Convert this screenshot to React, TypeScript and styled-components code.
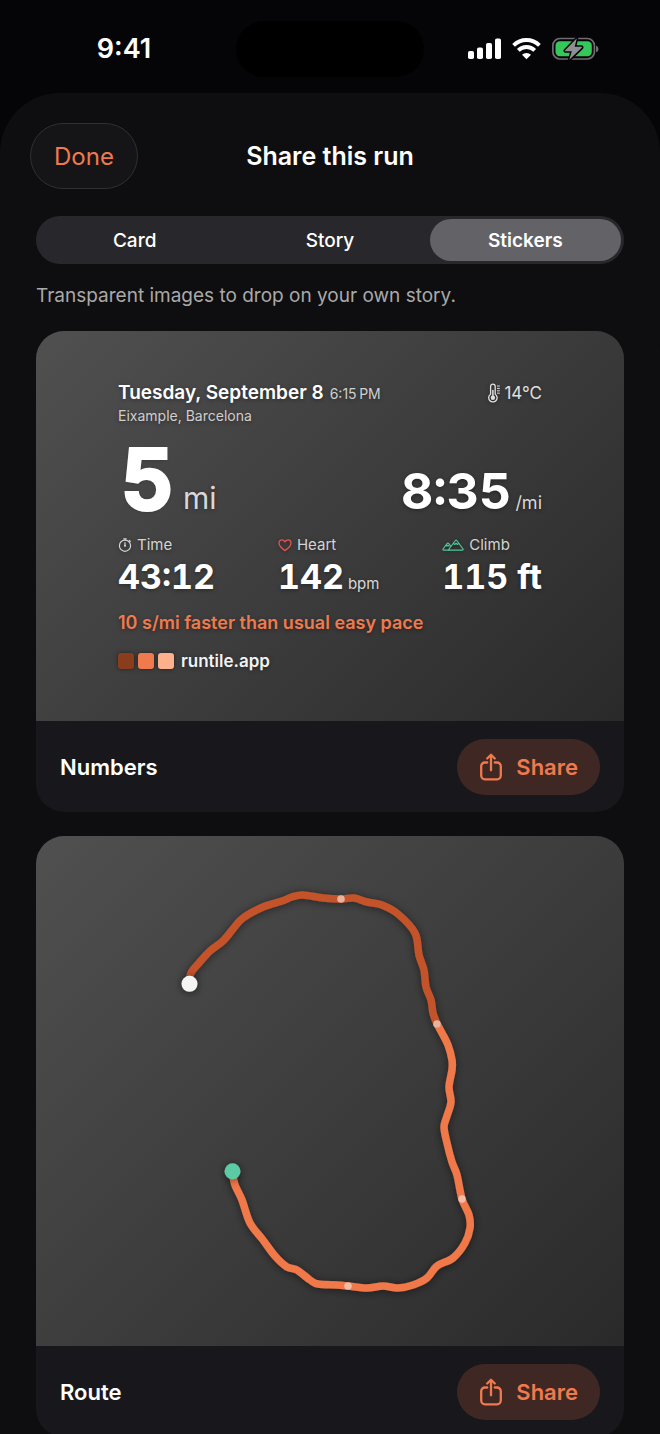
import React from "react";
import styled, { createGlobalStyle } from "styled-components";

const GlobalStyle = createGlobalStyle`
  *, *::before, *::after { box-sizing: border-box; }
  body {
    margin: 0;
    background: #050507;
    color: #fff;
    font-family: Inter, "Liberation Sans", sans-serif;
    -webkit-font-smoothing: antialiased;
  }
  h1, h2, p, dl, dd, dt { margin: 0; font: inherit; }
  button { font: inherit; border: 0; cursor: pointer; }
`;

const accent = "#ef7a4d";

const Screen = styled.div`
  display: flex;
  flex-direction: column;
  height: 100vh;
  overflow: hidden;
`;

const StatusBar = styled.header`
  display: grid;
  grid-template-columns: 1fr 188px 1fr;
  align-items: center;
  flex: none;
  height: 93px;
  padding: 4px 0 0;
`;

const Clock = styled.time`
  justify-self: center;
  padding-left: 12px;
  font-size: 27px;
  line-height: 32px;
  font-weight: 600;
`;

const Island = styled.div`
  height: 56px;
  border-radius: 28px;
  background: #000;
`;

const Indicators = styled.div`
  display: flex;
  justify-self: center;
  align-items: center;
  gap: 11px;
  padding-right: 17px;
`;

const Sheet = styled.main`
  flex: 1;
  min-height: 0;
  overflow-y: auto;
  scrollbar-width: none;
  padding: 30px 36px 24px;
  border-radius: 60px 60px 0 0;
  background: #0e0e10;
`;

const SheetHeader = styled.div`
  display: grid;
  grid-template-columns: 1fr auto 1fr;
  align-items: center;
  margin: 0 -6px 27px;
`;

const DoneButton = styled.button`
  justify-self: start;
  height: 66px;
  padding: 2px 23px 0;
  border: 1px solid #303033;
  border-radius: 33px;
  background: #151517;
  color: ${accent};
  font-size: 24px;
  line-height: 32px;
`;

const SheetTitle = styled.h1`
  font-size: 25px;
  line-height: 32px;
  font-weight: 600;
`;

const Segments = styled.div`
  display: grid;
  grid-template-columns: repeat(3, 1fr);
  gap: 4px;
  height: 48px;
  padding: 3px;
  border-radius: 24px;
  background: #28282c;
`;

const Segment = styled.button<{ $active?: boolean }>`
  padding: 2px 0 0;
  border-radius: 21px;
  background: ${(p) => (p.$active ? "#636267" : "transparent")};
  color: #fff;
  font-size: 19px;
  line-height: 24px;
  font-weight: ${(p) => (p.$active ? 600 : 500)};
`;

const Hint = styled.p`
  margin: 20px 0 23px;
  color: #a9a9a9;
  font-size: 19px;
  line-height: 24px;
`;

const StickerList = styled.div`
  display: flex;
  flex-direction: column;
  gap: 24px;
`;

const Card = styled.article`
  overflow: hidden;
  flex: none;
  border-radius: 28px;
  background: #18181c;
`;

const Preview = styled.div`
  background: linear-gradient(135deg, #505050, #2a2a2a);
`;

const CardFooter = styled.footer`
  display: flex;
  align-items: center;
  justify-content: space-between;
  height: 91px;
  padding: 0 24px;
`;

const CardName = styled.h2`
  font-size: 22px;
  line-height: 28px;
  font-weight: 600;
`;

const ShareButton = styled.button`
  display: flex;
  align-items: center;
  gap: 14px;
  height: 56px;
  padding: 0 22px 0 23px;
  border-radius: 28px;
  background: #3f2823;
  color: ${accent};
  font-size: 22px;
  line-height: 28px;
  font-weight: 600;
`;

const NumbersSticker = styled.div`
  padding: 50px 82px 48px;
  text-shadow: 0 1px 4px rgba(0, 0, 0, 0.4);

  svg { filter: drop-shadow(0 1px 2px rgba(0, 0, 0, 0.4)); }
`;

const TitleRow = styled.div`
  display: flex;
  align-items: center;
  justify-content: space-between;
`;

const When = styled.p`
  font-size: 19px;
  line-height: 24px;
  font-weight: 600;
`;

const TimeOfDay = styled.span`
  margin-left: 6px;
  color: #cfcfcf;
  font-size: 14px;
  line-height: 16px;
  font-weight: 400;
`;

const Weather = styled.p`
  display: flex;
  align-items: center;
  gap: 4px;
  color: #e0e0e0;
  font-size: 17px;
  line-height: 24px;
`;

const Place = styled.p`
  margin-top: 1px;
  color: #cfcfcf;
  font-size: 14px;
  line-height: 20px;
`;

const Headline = styled.div`
  display: flex;
  align-items: baseline;
  justify-content: space-between;
  margin: 18px 0 19px;
`;

const Distance = styled.p`
  padding-left: 3px;
  font-size: 82px;
  line-height: 72px;
  font-weight: 600;
  font-feature-settings: "tnum";
  -webkit-text-stroke: 4px #fff;
  stroke-linejoin: round;
`;

const Pace = styled.p`
  font-size: 50px;
  line-height: 48px;
  font-weight: 700;
  font-feature-settings: "tnum";
`;

const Unit = styled.span<{ $size: number; $gap: number }>`
  margin-left: ${(p) => p.$gap}px;
  color: #d8d8d8;
  font-size: ${(p) => p.$size}px;
  line-height: 1;
  font-weight: 400;
  -webkit-text-stroke: 0;
`;

const Stats = styled.dl`
  display: flex;
  justify-content: space-between;
`;

const StatLabel = styled.dt`
  display: flex;
  align-items: center;
  gap: 5px;
  color: #d4d4d4;
  font-size: 15px;
  line-height: 20px;
`;

const StatValue = styled.dd`
  margin-top: 2px;
  font-size: 34px;
  line-height: 40px;
  font-weight: 700;
  font-feature-settings: "tnum";
`;

const Comparison = styled.p`
  margin: 14px 0;
  color: ${accent};
  font-size: 18px;
  line-height: 24px;
  font-weight: 600;
`;

const Brand = styled.p`
  display: flex;
  align-items: center;
  gap: 4px;
  color: #f2f2f2;
  font-size: 17px;
  line-height: 24px;
  font-weight: 600;
`;

const Tile = styled.span<{ $color: string }>`
  width: 16px;
  height: 16px;
  border-radius: 3px;
  background: ${(p) => p.$color};
  box-shadow: 0 0 4px rgba(0, 0, 0, 0.5);
`;

const BrandName = styled.span`
  margin-left: 3px;
`;

const RouteDrawing = styled.svg`
  display: block;
  width: 100%;
  height: auto;
`;

const SignalIcon = () => (
  <svg width="33" height="22" viewBox="0 0 33 22" fill="#fff" aria-hidden="true">
    <rect x="0" y="13" width="6" height="8" rx="1.8" />
    <rect x="9" y="9.500" width="6" height="11.500" rx="1.800" />
    <rect x="18" y="5" width="6" height="16" rx="1.800" />
    <rect x="27" y="0.500" width="6" height="20.500" rx="1.800" />
  </svg>
);

const WifiIcon = () => (
  <svg width="29" height="22" viewBox="0 0 29 22" fill="none" stroke="#fff" strokeWidth="3.900" aria-hidden="true">
    <path d="M1.600 7.300a18.400 18.400 0 0 1 25.800 0" />
    <path d="M6.300 12.400a11.700 11.700 0 0 1 16.400 0" />
    <path d="M14.500 21.200l-4.500-4.500a6.500 6.500 0 0 1 9 0z" fill="#fff" stroke="none" />
  </svg>
);

const BatteryIcon = () => (
  <svg width="47" height="24" viewBox="0 0 47 24" aria-hidden="true">
    <rect x="0.900" y="1.500" width="41.500" height="20.500" rx="7" fill="none" stroke="#6e6e72" strokeWidth="1.700" />
    <path d="M44 8.700c1.700.5 2.500 1.700 2.500 3.300s-.8 2.800-2.500 3.300z" fill="#6e6e72" />
    <rect x="3.500" y="4.300" width="36.300" height="15" rx="4.200" fill="#34c759" />
    <path
      d="M24.800 1.200L13.200 13.300c-.4.500-.2 1 .4 1h6.200l-2.500 8.500L29.800 10.800c.4-.5.200-1-.4-1h-6.700z"
      fill="#8e8e93"
      stroke="#050507"
      strokeWidth="3"
      strokeLinejoin="round"
      paintOrder="stroke"
    />
  </svg>
);

const ThermometerIcon = () => (
  <svg width="12" height="20" viewBox="0 0 12 20" fill="none" stroke="currentColor" aria-hidden="true">
    <path d="M2.600 11.200V3.400a2.300 2.300 0 0 1 4.600 0v7.800a4.200 4.200 0 1 1-4.600 0z" strokeWidth="1.300" />
    <path d="M4.900 7.500v7" strokeWidth="1.500" strokeLinecap="round" />
    <circle cx="4.900" cy="14.700" r="2.200" fill="currentColor" stroke="none" />
    <path d="M9 3h2.800M9 5.400h2.800M9 7.800h2.800M9 10.200h2.800" strokeWidth="1" />
  </svg>
);

const StopwatchIcon = () => (
  <svg width="14" height="14" viewBox="0 0 14 14" fill="none" stroke="currentColor" strokeWidth="1.200" strokeLinecap="round" aria-hidden="true">
    <circle cx="7" cy="7.700" r="5.600" />
    <path d="M5.700.8h2.600M7 1v1.200M11.400 2.500l.9.900M7 4.700v3" />
    <circle cx="7" cy="7.800" r="1" fill="currentColor" stroke="none" />
  </svg>
);

const HeartIcon = () => (
  <svg width="14" height="14" viewBox="0 0 14 14" fill="none" stroke="#e5534f" strokeWidth="1.300" strokeLinejoin="round" aria-hidden="true">
    <path d="M7 12.600C3.500 10.300 1 7.900 1 5.100 1 3.200 2.300 1.900 3.900 1.900c1.300 0 2.400.7 3.100 2 .7-1.300 1.800-2 3.100-2 1.600 0 2.900 1.300 2.900 3.200 0 2.800-2.500 5.200-6 7.500z" />
  </svg>
);

const MountainIcon = () => (
  <svg width="22" height="12" viewBox="0 0 22 12" fill="none" stroke="#4fc79a" strokeWidth="1.200" strokeLinejoin="round" strokeLinecap="round" aria-hidden="true">
    <path d="M7.300 11.200h13c.8 0 1.100-.6.700-1.200L14.800 1.500c-.4-.6-1-.6-1.400 0L7 10c-.4.600-.3 1.200.3 1.200z" />
    <path d="M7.200 11.200H1.700c-.8 0-1.100-.6-.7-1.200l4.300-5.600c.4-.5.900-.5 1.300 0l1.900 2.400" />
    <path d="M11.400 4.400l1.300 1.100 1.400-1.200 1.400 1.200 1.300-1.100M4 6.400l1 .7 1-.8 1 .8" />
  </svg>
);

const ShareIcon = () => (
  <svg width="22" height="28" viewBox="0 0 22 28" fill="none" stroke="currentColor" strokeWidth="2.300" strokeLinecap="round" strokeLinejoin="round" aria-hidden="true">
    <path d="M7.200 9.500H4.900A3.700 3.700 0 0 0 1.200 13.200v9.400a3.700 3.700 0 0 0 3.700 3.700h12.200a3.700 3.700 0 0 0 3.700-3.700v-9.400a3.700 3.700 0 0 0-3.700-3.700h-2.300" />
    <path d="M11 17.300V2M7.200 5.500L11 1.700l3.800 3.800" />
  </svg>
);

type Point = [number, number];

const slowHalf: Point[] = [
  [153, 148], [155, 137], [163, 127], [174, 115], [187, 105], [197, 93],
  [207, 82], [227, 71], [246, 65], [256, 61], [267, 59], [287, 62],
  [305, 63], [318, 62], [331, 66], [346, 69], [362, 78], [379, 97],
  [383, 119], [388, 134], [390, 151], [395, 164], [397, 177], [401, 188],
];

const fastHalf: Point[] = [
  [401, 188], [406, 197], [412, 209], [416, 224], [416, 234], [413, 251],
  [415, 266], [411, 280], [408, 291], [411, 307], [416, 326], [421, 339],
  [426, 363], [433, 379], [434, 392], [429, 407], [417, 422], [401, 430],
  [391, 442], [377, 449], [362, 452], [347, 450], [331, 452], [312, 450],
  [301, 449], [282, 448], [274, 444], [261, 434], [251, 431], [239, 420],
  [227, 404], [214, 387], [206, 364], [199, 349], [196, 335],
];

const mileMarkers: Point[] = [[305, 63], [401, 188], [426, 363], [312, 450]];

// Catmull-Rom spline through the GPS samples, written as cubic segments.
function smoothPath(points: Point[]): string {
  let d = `M${points[0][0]} ${points[0][1]}`;
  for (let i = 0; i < points.length - 1; i++) {
    const a = points[Math.max(i - 1, 0)];
    const b = points[i];
    const c = points[i + 1];
    const e = points[Math.min(i + 2, points.length - 1)];
    d += `C${b[0] + (c[0] - a[0]) / 6} ${b[1] + (c[1] - a[1]) / 6} ${c[0] - (e[0] - b[0]) / 6} ${c[1] - (e[1] - b[1]) / 6} ${c[0]} ${c[1]}`;
  }
  return d;
}

const Route = () => (
  <RouteDrawing viewBox="0 0 588 510" role="img" aria-label="Route of the run">
    <defs>
      <filter id="soft" x="-20%" y="-20%" width="140%" height="140%">
        <feDropShadow dx="0" dy="1" stdDeviation="4" floodColor="#000" floodOpacity="0.5" />
      </filter>
    </defs>
    <g filter="url(#soft)" fill="none" strokeWidth="7.500" strokeLinecap="round" strokeLinejoin="round">
      <path d={smoothPath(fastHalf)} stroke="#f07848" />
      <path d={smoothPath(slowHalf)} stroke="#c5532a" />
    </g>
    {mileMarkers.map(([x, y]) => (
      <circle key={`${x}-${y}`} cx={x} cy={y} r="3.800" fill="#f3d3c6" fillOpacity="0.750" />
    ))}
    <g filter="url(#soft)">
      <circle cx="153.500" cy="147.800" r="8" fill="#f4f4f2" />
      <circle cx="196.500" cy="335.300" r="8" fill="#5bcba4" />
    </g>
  </RouteDrawing>
);

const StickerCard = ({ name, children }: { name: string; children: React.ReactNode }) => (
  <Card>
    <Preview>{children}</Preview>
    <CardFooter>
      <CardName>{name}</CardName>
      <ShareButton type="button">
        <ShareIcon />
        Share
      </ShareButton>
    </CardFooter>
  </Card>
);

export default function App() {
  return (
    <Screen>
      <GlobalStyle />
      <StatusBar>
        <Clock>9:41</Clock>
        <Island />
        <Indicators>
          <SignalIcon />
          <WifiIcon />
          <BatteryIcon />
        </Indicators>
      </StatusBar>
      <Sheet>
        <SheetHeader>
          <DoneButton type="button">Done</DoneButton>
          <SheetTitle>Share this run</SheetTitle>
        </SheetHeader>
        <Segments role="group" aria-label="Format">
          <Segment type="button">Card</Segment>
          <Segment type="button">Story</Segment>
          <Segment type="button" $active aria-pressed="true">Stickers</Segment>
        </Segments>
        <Hint>Transparent images to drop on your own story.</Hint>
        <StickerList>
          <StickerCard name="Numbers">
            <NumbersSticker>
              <TitleRow>
                <When>
                  Tuesday, September 8<TimeOfDay>6:15{"\u2009"}PM</TimeOfDay>
                </When>
                <Weather><ThermometerIcon />14°C</Weather>
              </TitleRow>
              <Place>Eixample, Barcelona</Place>
              <Headline>
                <Distance>5<Unit $size={30} $gap={9}>mi</Unit></Distance>
                <Pace>8:35<Unit $size={18} $gap={4}>/mi</Unit></Pace>
              </Headline>
              <Stats>
                <div>
                  <StatLabel><StopwatchIcon />Time</StatLabel>
                  <StatValue>43:12</StatValue>
                </div>
                <div>
                  <StatLabel><HeartIcon />Heart</StatLabel>
                  <StatValue>142<Unit $size={15} $gap={4}>bpm</Unit></StatValue>
                </div>
                <div>
                  <StatLabel><MountainIcon />Climb</StatLabel>
                  <StatValue>115 ft</StatValue>
                </div>
              </Stats>
              <Comparison>10 s/mi faster than usual easy pace</Comparison>
              <Brand>
                <Tile $color="#8a3d1d" />
                <Tile $color="#ef7a4d" />
                <Tile $color="#fdb08c" />
                <BrandName>runtile.app</BrandName>
              </Brand>
            </NumbersSticker>
          </StickerCard>
          <StickerCard name="Route">
            <Route />
          </StickerCard>
        </StickerList>
      </Sheet>
    </Screen>
  );
}
